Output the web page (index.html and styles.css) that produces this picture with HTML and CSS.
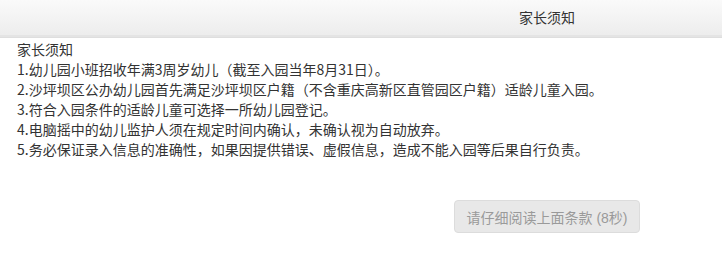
FILE: index.html
```html
<!DOCTYPE html>
<html lang="zh-CN">
<head>
    <meta charset="UTF-8">
    <title>家长须知</title>
    <link rel="stylesheet" href="styles.css">
</head>
<body>
    <!-- Dialog header -->
    <div class="dialog-head">
        <span class="dialog-title">家长须知</span>
    </div>

    <!-- Notice content -->
    <div class="notice">
        <p>家长须知</p>
        <p>1.幼儿园小班招收年满3周岁幼儿（截至入园当年8月31日）。</p>
        <p>2.沙坪坝区公办幼儿园首先满足沙坪坝区户籍（不含重庆高新区直管园区户籍）适龄儿童入园。</p>
        <p>3.符合入园条件的适龄儿童可选择一所幼儿园登记。</p>
        <p>4.电脑摇中的幼儿监护人须在规定时间内确认，未确认视为自动放弃。</p>
        <p>5.务必保证录入信息的准确性，如果因提供错误、虚假信息，造成不能入园等后果自行负责。</p>
    </div>

    <div class="actions">
        <button class="btn btn-disabled" disabled>请仔细阅读上面条款 (8秒)</button>
    </div>
</body>
</html>
```

FILE: styles.css
```css
body {
    margin: 0;
    padding: 0;
    background: #fff;
    font-family: 'Noto Sans CJK SC', 'Liberation Sans', sans-serif;
    font-size: 14px;
    color: #333;
}

/* Header */
.dialog-head {
    height: 37px;
    line-height: 35px;
    padding-left: 519px;
    background: linear-gradient(to bottom, #fafafa, #ececec);
    border-bottom: 1px solid #dedede;
    box-shadow: inset 0 -2px 0 #e4e4e4;
}

.dialog-title {
    color: #333;
    font-size: 14px;
}

/* Notice */
.notice {
    padding: 1px 17px 0;
}

.notice p {
    margin: 0;
    line-height: 20px;
}

/* Button */
.actions {
    display: flex;
    justify-content: flex-end;
    padding-right: 82px;
    margin-top: 41px;
}

.btn {
    font-family: 'Liberation Sans', 'Noto Sans CJK SC', sans-serif;
    font-size: 14px;
    height: 33px;
    width: 186px;
    border-radius: 4px;
    padding: 0;
}

.btn-disabled {
    background: #e8e8e8;
    border: 1px solid #dcdcdc;
    color: #9a9a9a;
}
```
